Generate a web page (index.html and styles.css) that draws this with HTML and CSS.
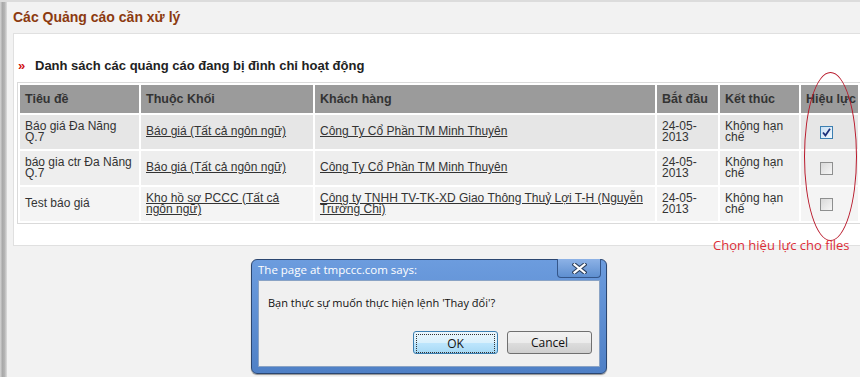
FILE: index.html
```html
<!DOCTYPE html>
<html lang="vi">
  <head>
    <meta charset="UTF-8" />
    <meta name="viewport" content="width=device-width, initial-scale=1.0" />
    <title>Các Quảng cáo cần xử lý</title>
    <link rel="stylesheet" href="styles.css">
  </head>
  <body>
    <div class="page">
      <div class="edge"></div>
      <div class="main">
        <h1 class="box-title">Các Quảng cáo cần xử lý</h1>
        <div class="panel">
          <h2 class="list-title"><span class="arrow">»</span>Danh sách các quảng cáo đang bị đình chỉ hoạt động</h2>
          <table class="ads">
            <colgroup>
              <col class="c-title" />
              <col class="c-block" />
              <col class="c-client" />
              <col class="c-start" />
              <col class="c-end" />
              <col class="c-active" />
            </colgroup>
            <thead>
              <tr>
                <th>Tiêu đề</th>
                <th>Thuộc Khối</th>
                <th>Khách hàng</th>
                <th>Bắt đầu</th>
                <th>Kết thúc</th>
                <th>Hiệu lực</th>
              </tr>
            </thead>
            <tbody>
              <tr class="row-1">
                <td>Báo giá Đa Năng Q.7</td>
                <td><a href="#">Báo giá (Tất cả ngôn ngữ)</a></td>
                <td><a href="#">Công Ty Cổ Phần TM Minh Thuyên</a></td>
                <td>24-05-2013</td>
                <td>Không hạn chế</td>
                <td class="check-cell"><span class="check checked"><svg width="9" height="9" viewBox="0 0 9 9"><path d="M1 4.5 L3.4 7.4 L8 0.8" fill="none" stroke="#1c2f7a" stroke-width="1.8"/></svg></span></td>
              </tr>
              <tr class="row-2">
                <td>báo gia ctr Đa Năng Q.7</td>
                <td><a href="#">Báo giá (Tất cả ngôn ngữ)</a></td>
                <td><a href="#">Công Ty Cổ Phần TM Minh Thuyên</a></td>
                <td>24-05-2013</td>
                <td>Không hạn chế</td>
                <td class="check-cell"><span class="check"></span></td>
              </tr>
              <tr class="row-3">
                <td>Test báo giá</td>
                <td><a href="#">Kho hồ sơ PCCC (Tất cả ngôn ngữ)</a></td>
                <td><a href="#">Công ty TNHH TV-TK-XD Giao Thông Thuỷ Lợi T-H (Nguyễn Trường Chi)</a></td>
                <td>24-05-2013</td>
                <td>Không hạn chế</td>
                <td class="check-cell"><span class="check"></span></td>
              </tr>
            </tbody>
          </table>
        </div>
      </div>
    </div>

    <!-- red hand-drawn note over the table -->
    <div class="note-ring"></div>
    <div class="note-text">Chọn hiệu lực cho files</div>

    <div class="dialog">
      <div class="dialog-bar">
        <span class="dialog-title">The page at tmpccc.com says:</span>
        <span class="dialog-close">
          <svg width="15" height="11" viewBox="0 0 15 11">
            <path d="M2.5 1.5 L12.5 9.5 M12.5 1.5 L2.5 9.5" stroke="#2c3f5c" stroke-width="4.2" stroke-linecap="square"/>
            <path d="M2.5 1.5 L12.5 9.5 M12.5 1.5 L2.5 9.5" stroke="#ffffff" stroke-width="2.2" stroke-linecap="square"/>
          </svg>
        </span>
      </div>
      <div class="dialog-body">
        <p class="dialog-msg">Bạn thực sự muốn thực hiện lệnh 'Thay đổi'?</p>
        <div class="dialog-buttons">
          <button class="btn btn-ok"><span>OK</span></button>
          <button class="btn">Cancel</button>
        </div>
      </div>
    </div>
  </body>
</html>
```

FILE: styles.css
```css
body {
  margin: 0;
  height: 375px;
  overflow: hidden;
  position: relative;
  background: #f2f2f2;
  border-top: 2px solid #dcdcdc;
  font-family: "Liberation Sans", Arial, sans-serif;
  font-size: 12px;
  color: #333;
}

.page {
  display: flex;
  height: 100%;
}

.edge {
  flex: none;
  width: 7px;
  background: linear-gradient(to right, #d6d6d6 0, #a9a9a9 35%, #b4b4b4 65%, #dedede 100%);
}

.main {
  flex: 1;
  min-width: 0;
  padding-left: 6px;
}

.box-title {
  margin: 0;
  height: 31px;
  line-height: 31px;
  font-size: 14px;
  font-weight: bold;
  color: #8c3a10;
}

.panel {
  background: #fff;
  border: 1px solid #e0e0e0;
  border-right: 0;
  padding: 0 0 21px 3px;
}

.list-title {
  margin: 0;
  padding: 24px 0 8px 1px;
  line-height: 16px;
  font-size: 13px;
  font-weight: bold;
  color: #222;
}

.arrow {
  display: inline-block;
  width: 17px;
  color: #d01010;
  font-size: 13px;
}

.ads {
  width: 843px;
  table-layout: fixed;
  border: 1px solid #dadada;
  border-spacing: 2px;
}

.c-title { width: 119px; }
.c-block { width: 172px; }
.c-client { width: 340px; }
.c-start { width: 61px; }
.c-end { width: 79px; }
.c-active { width: 57px; }

.ads th {
  height: 28px;
  padding: 0 5px;
  background: #9b9b9b;
  text-align: left;
  font-size: 12.5px;
  font-weight: bold;
  color: #333;
  white-space: nowrap;
  overflow: hidden;
}

.ads td {
  height: 34px;
  padding: 0 5px;
  line-height: 11.5px;
  vertical-align: middle;
}

.ads a {
  color: #333;
}

.row-1 td { background: #e6e6e6; }
.row-2 td { background: #eeeeee; }
.row-3 td { background: #f4f4f4; }

.ads .check-cell {
  padding: 0 0 0 19px;
  text-align: left;
}

.check {
  display: inline-flex;
  align-items: center;
  justify-content: center;
  width: 11px;
  height: 11px;
  border: 1px solid #8e8f8f;
  background: linear-gradient(135deg, #d9d9d9, #f6f6f6);
  vertical-align: middle;
}

.check.checked {
  border-color: #3c7fb1;
  background: linear-gradient(135deg, #c9dff3, #f2f8fd);
}

.note-ring {
  position: absolute;
  left: 804px;
  top: 70px;
  width: 51px;
  height: 167px;
  border: 1px solid #b8182a;
  border-radius: 50%;
}

.note-text {
  position: absolute;
  left: 713px;
  top: 234px;
  font-family: "Open Sans", sans-serif;
  font-size: 13px;
  color: #dc2d38;
}

.dialog {
  position: absolute;
  left: 251px;
  top: 257px;
  width: 342px;
  height: 107px;
  padding: 0 6px 6px 6px;
  border: 1px solid #2b4670;
  border-radius: 6px;
  background: linear-gradient(#6c9cde, #4f80c6);
  font-family: "Open Sans", "Noto Sans", sans-serif;
  box-shadow: 0 1px 1px rgba(0, 0, 0, 0.4);
}

.dialog-bar {
  display: flex;
  justify-content: space-between;
  height: 20px;
}

.dialog-title {
  padding-top: 2px;
  font-size: 11.5px;
  color: #fff;
}

.dialog-close {
  display: flex;
  align-items: center;
  justify-content: center;
  width: 42px;
  height: 18px;
  margin-top: -1px;
  margin-right: -1px;
  border: 1px solid #34568a;
  border-top: 0;
  border-radius: 0 0 4px 4px;
  background: linear-gradient(#8db2e6, #5e8fd0);
}

.dialog-body {
  height: 85px;
  border: 1px solid #8aa3c5;
  background: #f0f0f0;
}

.dialog-msg {
  margin: 14px 0 0 9px;
  font-size: 11px;
  color: #111;
}

.dialog-buttons {
  display: flex;
  justify-content: flex-end;
  gap: 9px;
  padding: 21px 7px 0 0;
}

.btn {
  width: 85px;
  height: 23px;
  padding: 0;
  border: 1px solid #707070;
  border-radius: 3px;
  background: linear-gradient(#f2f2f2 0, #ebebeb 50%, #dddddd 51%, #cfcfcf 100%);
  font-family: "Open Sans", "Noto Sans", sans-serif;
  font-size: 12px;
  color: #111;
}

.btn-ok {
  padding: 2px;
  border-color: #3c7fb1;
  background: linear-gradient(#eaf6fd 0, #d9f0fc 50%, #bee6fd 51%, #a7d9f5 100%);
}

.btn-ok span {
  display: block;
  height: 17px;
  line-height: 17px;
  border: 1px dotted #333;
}
```
